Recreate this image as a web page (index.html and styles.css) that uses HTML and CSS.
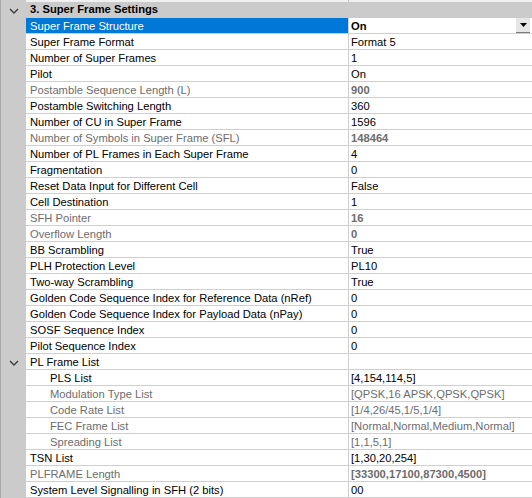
FILE: index.html
```html
<!DOCTYPE html>
<html>
<head>
<meta charset="utf-8">
<link rel="stylesheet" href="styles.css">
</head>
<body>
<div class="grid">
  <div class="strip"><div class="gut"></div><div class="sn"></div><div class="sv"></div></div>
  <div class="cat">
    <div class="gut"><svg class="chev" width="10" height="6" viewBox="0 0 10 6"><path d="M1 1 L5 5 L9 1" fill="none" stroke="#3c3c3c" stroke-width="1.4"/></svg></div>
    <div class="catname">3. Super Frame Settings</div>
  </div>
  <div class="row"><div class="gut"></div><div class="name sel">Super Frame Structure</div><div class="val b">On<span class="dd"><svg width="7" height="4" viewBox="0 0 7 4"><path d="M0 0 H7 L3.5 4 Z" fill="#000"/></svg></span></div></div>
  <div class="row"><div class="gut"></div><div class="name">Super Frame Format</div><div class="val">Format 5</div></div>
  <div class="row"><div class="gut"></div><div class="name">Number of Super Frames</div><div class="val">1</div></div>
  <div class="row"><div class="gut"></div><div class="name">Pilot</div><div class="val">On</div></div>
  <div class="row"><div class="gut"></div><div class="name g">Postamble Sequence Length (L)</div><div class="val g b">900</div></div>
  <div class="row"><div class="gut"></div><div class="name">Postamble Switching Length</div><div class="val">360</div></div>
  <div class="row"><div class="gut"></div><div class="name">Number of CU in Super Frame</div><div class="val">1596</div></div>
  <div class="row"><div class="gut"></div><div class="name g">Number of Symbols in Super Frame (SFL)</div><div class="val g b">148464</div></div>
  <div class="row"><div class="gut"></div><div class="name">Number of PL Frames in Each Super Frame</div><div class="val">4</div></div>
  <div class="row"><div class="gut"></div><div class="name">Fragmentation</div><div class="val">0</div></div>
  <div class="row"><div class="gut"></div><div class="name">Reset Data Input for Different Cell</div><div class="val">False</div></div>
  <div class="row"><div class="gut"></div><div class="name">Cell Destination</div><div class="val">1</div></div>
  <div class="row"><div class="gut"></div><div class="name g">SFH Pointer</div><div class="val g b">16</div></div>
  <div class="row"><div class="gut"></div><div class="name g">Overflow Length</div><div class="val g b">0</div></div>
  <div class="row"><div class="gut"></div><div class="name">BB Scrambling</div><div class="val">True</div></div>
  <div class="row"><div class="gut"></div><div class="name">PLH Protection Level</div><div class="val">PL10</div></div>
  <div class="row"><div class="gut"></div><div class="name">Two-way Scrambling</div><div class="val">True</div></div>
  <div class="row"><div class="gut"></div><div class="name">Golden Code Sequence Index for Reference Data (nRef)</div><div class="val">0</div></div>
  <div class="row"><div class="gut"></div><div class="name">Golden Code Sequence Index for Payload Data (nPay)</div><div class="val">0</div></div>
  <div class="row"><div class="gut"></div><div class="name">SOSF Sequence Index</div><div class="val">0</div></div>
  <div class="row"><div class="gut"></div><div class="name">Pilot Sequence Index</div><div class="val">0</div></div>
  <div class="row"><div class="gut"><svg class="chev2" width="10" height="6" viewBox="0 0 10 6"><path d="M1 1 L5 5 L9 1" fill="none" stroke="#3c3c3c" stroke-width="1.4"/></svg></div><div class="name">PL Frame List</div><div class="val"></div></div>
  <div class="row"><div class="gut"></div><div class="name sub">PLS List</div><div class="val">[4,154,114,5]</div></div>
  <div class="row"><div class="gut"></div><div class="name sub g">Modulation Type List</div><div class="val g">[QPSK,16 APSK,QPSK,QPSK]</div></div>
  <div class="row"><div class="gut"></div><div class="name sub g">Code Rate List</div><div class="val g">[1/4,26/45,1/5,1/4]</div></div>
  <div class="row"><div class="gut"></div><div class="name sub g">FEC Frame List</div><div class="val g">[Normal,Normal,Medium,Normal]</div></div>
  <div class="row"><div class="gut"></div><div class="name sub g">Spreading List</div><div class="val g">[1,1,5,1]</div></div>
  <div class="row"><div class="gut"></div><div class="name">TSN List</div><div class="val">[1,30,20,254]</div></div>
  <div class="row"><div class="gut"></div><div class="name g">PLFRAME Length</div><div class="val g b">[33300,17100,87300,4500]</div></div>
  <div class="row"><div class="gut"></div><div class="name">System Level Signalling in SFH (2 bits)</div><div class="val">00</div></div>
</div>
</body>
</html>
```
FILE: styles.css
```css
html, body {
  margin: 0;
  padding: 0;
  background: #ffffff;
}
.grid {
  width: 532px;
  height: 498px;
  overflow: hidden;
  font-family: "Liberation Sans", Arial, sans-serif;
  font-size: 11.2px;
  color: #000;
  border-left: 1px solid #a8a8a8;
  box-sizing: border-box;
}
.gut {
  width: 25px;
  flex: none;
  background: #cbcbcb;
  position: relative;
}
.strip {
  display: flex;
  height: 2px;
}
.strip .sn {
  width: 322px;
  flex: none;
  background: #f0f0f0;
}
.strip .sv {
  flex: 1;
  background: #f0f0f0;
  border-left: 1px solid #c8c8c8;
}
.cat {
  display: flex;
  height: 16px;
  background: #cbcbcb;
}
.catname {
  font-weight: bold;
  line-height: 15px;
  padding-left: 4px;
}
.chev {
  position: absolute;
  left: 8px;
  top: 6px;
}
.chev2 {
  position: absolute;
  left: 8px;
  top: 6px;
}
.row {
  display: flex;
  height: 16px;
}
.name {
  width: 318px;
  flex: none;
  padding-left: 4px;
  line-height: 16px;
  border-bottom: 1px solid #cfcfcf;
  white-space: nowrap;
  overflow: hidden;
}
.name.sub {
  width: 298px;
  padding-left: 24px;
}
.name.sel {
  background: #0078d7;
  color: #ffffff;
}
.val {
  flex: 1;
  position: relative;
  padding-left: 2px;
  line-height: 16px;
  border-left: 1px solid #cfcfcf;
  border-bottom: 1px solid #cfcfcf;
  white-space: nowrap;
}
.g {
  color: #6d6d6d;
}
.b {
  font-weight: bold;
}
.dd {
  position: absolute;
  right: 2px;
  top: 0;
  width: 14px;
  height: 14px;
  background: #e6e6e6;
  border-bottom: 1px solid #7a7a7a;
  display: flex;
  align-items: center;
  justify-content: center;
}
```
